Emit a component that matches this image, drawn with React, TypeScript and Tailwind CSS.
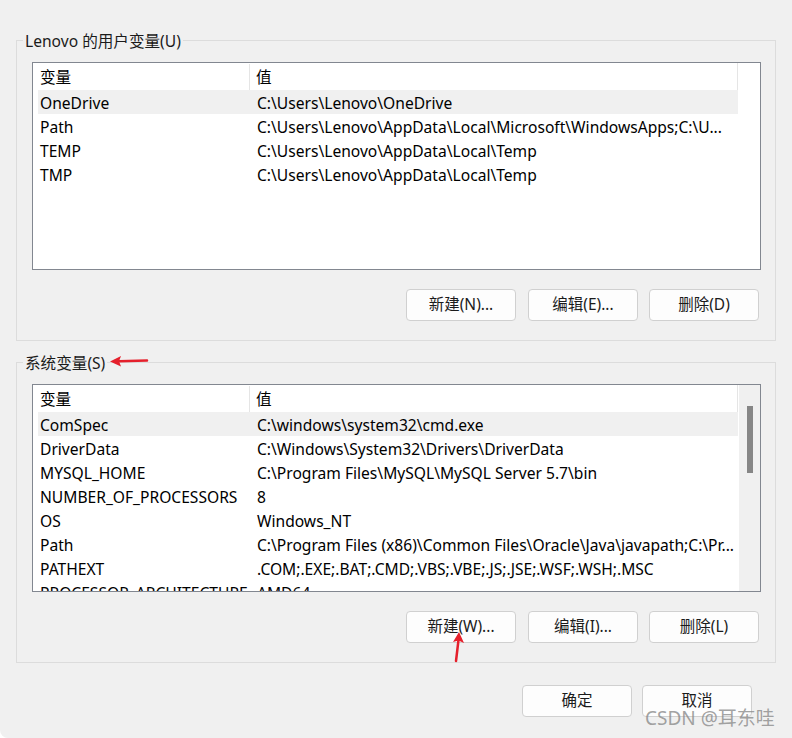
import React from 'react';

type Row = { name: string; value: string };

const userVars: Row[] = [
  { name: 'OneDrive', value: 'C:\\Users\\Lenovo\\OneDrive' },
  { name: 'Path', value: 'C:\\Users\\Lenovo\\AppData\\Local\\Microsoft\\WindowsApps;C:\\U...' },
  { name: 'TEMP', value: 'C:\\Users\\Lenovo\\AppData\\Local\\Temp' },
  { name: 'TMP', value: 'C:\\Users\\Lenovo\\AppData\\Local\\Temp' },
];

const sysVars: Row[] = [
  { name: 'ComSpec', value: 'C:\\windows\\system32\\cmd.exe' },
  { name: 'DriverData', value: 'C:\\Windows\\System32\\Drivers\\DriverData' },
  { name: 'MYSQL_HOME', value: 'C:\\Program Files\\MySQL\\MySQL Server 5.7\\bin' },
  { name: 'NUMBER_OF_PROCESSORS', value: '8' },
  { name: 'OS', value: 'Windows_NT' },
  { name: 'Path', value: 'C:\\Program Files (x86)\\Common Files\\Oracle\\Java\\javapath;C:\\Pr...' },
  { name: 'PATHEXT', value: '.COM;.EXE;.BAT;.CMD;.VBS;.VBE;.JS;.JSE;.WSF;.WSH;.MSC' },
  { name: 'PROCESSOR_ARCHITECTURE', value: 'AMD64' },
];

const font = "font-['Segoe_UI','Noto_Sans','Noto_Sans_CJK_SC',sans-serif]";

const Button: React.FC<{ label: string; className?: string }> = ({ label, className = '' }) => (
  <button
    className={`w-[110px] h-[32px] rounded-[4px] border border-[#d0d0d0] bg-[#fdfdfd] text-[15.5px] text-[#1b1b1b] flex items-center justify-center ${className}`}
  >
    {label}
  </button>
);

const VarList: React.FC<{ rows: Row[]; scroll?: boolean }> = ({ rows, scroll }) => (
  <div className="h-[208px] border border-[#828790] bg-white flex overflow-hidden">
    <div className="w-[705px] pl-[5px] flex flex-col overflow-hidden">
      {/* header */}
      <div className="h-[27px] shrink-0 flex text-[15.6px] leading-[27px] pt-[1px] border-r border-[#e5e5e5]">
        <div className="w-[212px] pl-[2px] border-r border-[#e5e5e5]">变量</div>
        <div className="flex-1 pl-[6px]">值</div>
      </div>
      {rows.map((r, i) => (
        <div
          key={r.name + i}
          className={`h-[24px] shrink-0 flex text-[15.6px] leading-[24px] pt-[1px] whitespace-nowrap ${i === 0 ? 'bg-[#f0f0f0]' : ''}`}
        >
          <div className="w-[212px] pl-[2px] overflow-hidden">{r.name}</div>
          <div className="flex-1 pl-[7px] overflow-hidden">{r.value}</div>
        </div>
      ))}
    </div>
    {scroll && (
      <div className="ml-auto w-[21px] bg-[#f0f0f0] pt-[21px] flex justify-center">
        <div className="w-[6px] h-[67px] bg-[#868686]" />
      </div>
    )}
  </div>
);

const Group: React.FC<{ title: string; rows: Row[]; scroll?: boolean; buttons: string[] }> = ({
  title,
  rows,
  scroll,
  buttons,
}) => (
  <div className="mx-[16px] border border-[#dcdcdc] pl-[15px] pr-[14px] pb-[19px]">
    <div className="-mt-[11px] -ml-[9px] w-fit px-[2px] bg-[#f0f0f0] text-[15.6px] leading-[22px] text-[#1b1b1b]">
      {title}
    </div>
    <div className="mt-[10px]">
      <VarList rows={rows} scroll={scroll} />
    </div>
    <div className="mt-[19px] flex justify-end gap-[11px] pr-[2px]">
      <Button label={buttons[0]} className="mr-[1px]" />
      <Button label={buttons[1]} />
      <Button label={buttons[2]} />
    </div>
  </div>
);

export default function App() {
  return (
    <div className={`w-[792px] h-[738px] bg-white ${font}`}>
      <div className="relative w-full h-full bg-[#f0f0f0] rounded-bl-[8px] pt-[40px] text-black">
        <Group title="Lenovo 的用户变量(U)" rows={userVars} buttons={['新建(N)...', '编辑(E)...', '删除(D)']} />
        <div className="h-[21px]" />
        <Group
          title="系统变量(S)"
          rows={sysVars}
          scroll
          buttons={['新建(W)...', '编辑(I)...', '删除(L)']}
        />
        <div className="mt-[22px] flex justify-end gap-[10px] pr-[40px]">
          <Button label="确定" />
          <Button label="取消" />
        </div>

        {/* red annotation arrows */}
        <svg className="absolute left-[105px] top-[353px]" width="45" height="16" viewBox="0 0 45 16">
          <path d="M42 7.5 L14 8.2" stroke="#e5202c" strokeWidth="2.5" strokeLinecap="round" fill="none" />
          <path d="M5 8.5 L16 3 L14 8.2 L16 13.5 Z" fill="#e5202c" />
        </svg>
        <svg className="absolute left-[448px] top-[628px]" width="18" height="38" viewBox="0 0 18 38">
          <path d="M8 33 L10.5 12" stroke="#e5202c" strokeWidth="2.5" strokeLinecap="round" fill="none" />
          <path d="M11 4 L16 15 L10.5 12.5 L5 14 Z" fill="#e5202c" />
        </svg>

        {/* watermark */}
        <div className="absolute left-[645px] top-[706px] text-[19px] leading-[24px] text-[#8a8a8a]/80 whitespace-nowrap">
          CSDN @耳东哇
        </div>
      </div>
    </div>
  );
}
